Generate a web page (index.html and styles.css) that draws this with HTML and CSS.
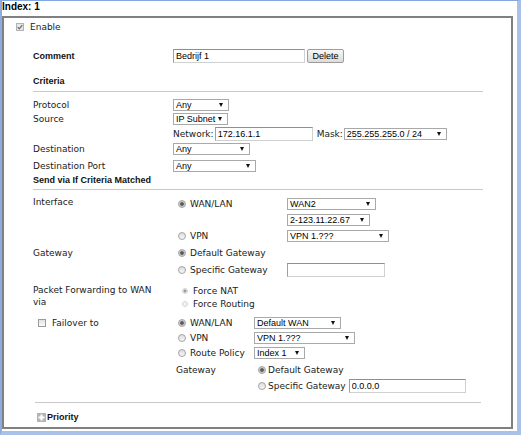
FILE: index.html
```html
<!DOCTYPE html>
<html lang="en">
<head>
    <meta charset="UTF-8">
    <title>Route Policy - Index 1</title>
    <link rel="stylesheet" href="styles.css">
</head>
<body>
    <div class="frame">
        <div class="frame-title">Index: 1</div>

        <div class="panel">
            <div class="enable-row">
                <svg class="check" width="8" height="8" viewBox="0 0 8 8">
                    <rect x="0.5" y="0.5" width="7" height="7" fill="#e8e8e8" stroke="#b3b3b3"/>
                    <path d="M1.7 4.1 L3.3 5.8 L6.3 2.1" fill="none" stroke="#707070" stroke-width="1.3"/>
                </svg>
                <span>Enable</span>
            </div>

            <div class="section">
                <!-- Comment -->
                <div class="row h14 mt16">
                    <div class="lbl bold">Comment</div>
                    <div class="val">
                        <input class="field w132" type="text" value="Bedrijf 1">
                        <button class="btn">Delete</button>
                    </div>
                </div>

                <!-- Criteria -->
                <div class="row mt12">
                    <div class="lbl bold">Criteria</div>
                </div>
                <div class="sep mt4"></div>

                <div class="row mt7">
                    <div class="lbl">Protocol</div>
                    <div class="val"><div class="sel w56">Any</div></div>
                </div>
                <div class="row mt2">
                    <div class="lbl">Source</div>
                    <div class="val"><div class="sel w55">IP Subnet</div></div>
                </div>
                <div class="row h14 mt2">
                    <div class="lbl"></div>
                    <div class="val">
                        <span>Network:</span>
                        <input class="field w98 ml1" type="text" value="172.16.1.1">
                        <span class="ml4">Mask:</span>
                        <div class="sel w103 ml1">255.255.255.0 / 24</div>
                    </div>
                </div>
                <div class="row mt2">
                    <div class="lbl">Destination</div>
                    <div class="val"><div class="sel w77">Any</div></div>
                </div>
                <div class="row mt5">
                    <div class="lbl">Destination Port</div>
                    <div class="val"><div class="sel w83">Any</div></div>
                </div>
                <div class="row mt2">
                    <div class="lbl bold wide">Send via If Criteria Matched</div>
                </div>
                <div class="sep mt3"></div>

                <!-- Interface -->
                <div class="row h13 mt7">
                    <div class="lbl top">Interface</div>
                    <div class="val">
                        <div class="opt"><span class="radio on"></span><span>WAN/LAN</span></div>
                        <div class="sel w89">WAN2</div>
                    </div>
                </div>
                <div class="row h13 mt3">
                    <div class="lbl"></div>
                    <div class="val">
                        <div class="opt"></div>
                        <div class="sel w83">2-123.11.22.67</div>
                    </div>
                </div>
                <div class="row h13 mt3">
                    <div class="lbl"></div>
                    <div class="val">
                        <div class="opt"><span class="radio"></span><span>VPN</span></div>
                        <div class="sel w102">VPN 1.???</div>
                    </div>
                </div>

                <!-- Gateway -->
                <div class="row mt5">
                    <div class="lbl">Gateway</div>
                    <div class="val">
                        <div class="opt"><span class="radio on"></span><span>Default Gateway</span></div>
                    </div>
                </div>
                <div class="row h13 mt4">
                    <div class="lbl"></div>
                    <div class="val">
                        <div class="opt"><span class="radio"></span><span>Specific Gateway</span></div>
                        <input class="field w98" type="text" value="">
                    </div>
                </div>

                <!-- Packet forwarding -->
                <div class="row h26 mt8 start">
                    <div class="lbl multi">Packet Forwarding to WAN via</div>
                    <div class="val lines">
                        <div class="line"><span class="radio dis on"></span><span>Force NAT</span></div>
                        <div class="line"><span class="radio dis"></span><span>Force Routing</span></div>
                    </div>
                </div>

                <!-- Failover -->
                <div class="row mt7">
                    <div class="lbl failover"><span class="box"></span><span>Failover to</span></div>
                    <div class="val">
                        <div class="opt narrow"><span class="radio on"></span><span>WAN/LAN</span></div>
                        <div class="sel w87">Default WAN</div>
                    </div>
                </div>
                <div class="row mt3">
                    <div class="lbl"></div>
                    <div class="val">
                        <div class="opt narrow"><span class="radio"></span><span>VPN</span></div>
                        <div class="sel w101">VPN 1.???</div>
                    </div>
                </div>
                <div class="row mt3">
                    <div class="lbl"></div>
                    <div class="val">
                        <div class="opt narrow"><span class="radio"></span><span>Route Policy</span></div>
                        <div class="sel w51">Index 1</div>
                    </div>
                </div>
                <div class="row mt5">
                    <div class="lbl"></div>
                    <div class="val sub">
                        <div class="sub-lbl">Gateway</div>
                        <span class="radio on"></span><span class="ml2">Default Gateway</span>
                    </div>
                </div>
                <div class="row h13 mt3">
                    <div class="lbl"></div>
                    <div class="val sub">
                        <div class="sub-lbl"></div>
                        <span class="radio"></span><span class="ml2">Specific Gateway</span>
                        <input class="field w117 ml3" type="text" value="0.0.0.0">
                    </div>
                </div>

                <div class="sep short mt10"></div>

                <div class="row mt8">
                    <div class="priority">
                        <svg width="9" height="9" viewBox="0 0 9 9">
                            <rect width="9" height="9" fill="#b4b4b4"/>
                            <path d="M4.5 1.5v6M1.5 4.5h6" stroke="#fff" stroke-width="2"/>
                        </svg>
                        <span class="bold">Priority</span>
                    </div>
                </div>
            </div>
        </div>
    </div>
</body>
</html>
```

FILE: styles.css
```css
* {
    margin: 0;
    padding: 0;
    box-sizing: border-box;
}

body {
    font-family: "DejaVu Sans", Verdana, sans-serif;
    font-size: 9px;
    color: #1a1a1a;
    background: #fff;
}

.frame {
    width: 521px;
    height: 435px;
    border-top: 1px solid #86a6e2;
    border-left: 2px solid #8fabe0;
    border-right: 4px solid #a9c0e9;
    border-bottom: 4px solid #a9c0e9;
}

.frame-title {
    height: 15px;
    line-height: 15px;
    font: bold 10px "Liberation Sans", Arial, sans-serif;
    color: #000;
}

.panel {
    width: 511px;
    height: 413px;
    border: 2px solid #808080;
    padding: 3px 0 0 12px;
}

.enable-row {
    display: flex;
    align-items: center;
    height: 12px;
}

.enable-row span {
    margin-left: 6px;
}

.section {
    margin-left: 17px;
    width: 450px;
}

/* rows */
.row {
    display: flex;
    align-items: center;
    height: 12px;
}

.row.h13 { height: 13px; }
.row.h14 { height: 14px; }
.row.h26 { height: 26px; }
.row.start { align-items: flex-start; }

.mt2 { margin-top: 2px; }
.mt3 { margin-top: 3px; }
.mt4 { margin-top: 4px; }
.mt5 { margin-top: 5px; }
.mt7 { margin-top: 7px; }
.mt8 { margin-top: 8px; }
.mt10 { margin-top: 10px; }
.mt12 { margin-top: 12px; }
.mt16 { margin-top: 16px; }

.ml1 { margin-left: 1px; }
.ml2 { margin-left: 2px; }
.ml3 { margin-left: 3px; }
.ml4 { margin-left: 4px; }

.lbl {
    width: 140px;
    flex-shrink: 0;
    white-space: nowrap;
}

.lbl.top {
    align-self: flex-start;
    line-height: 10px;
}

.lbl.multi {
    white-space: normal;
    width: 140px;
    padding-right: 14px;
    line-height: 12px;
}

.lbl.wide {
    width: auto;
}

.bold {
    font: bold 9px "Liberation Sans", Arial, sans-serif;
    color: #111;
}

.val {
    display: flex;
    align-items: center;
    height: 100%;
}

.sep {
    height: 1px;
    background: #c9c9c9;
    width: 450px;
}

.sep.short {
    margin-left: 2px;
    width: 446px;
}

/* form controls */
.field {
    height: 14px;
    border: 1px solid;
    border-color: #8f8f8f #d0d0d0 #d0d0d0 #a0a0a0;
    padding: 0 2px;
    font: 9px "Liberation Sans", Arial, sans-serif;
    color: #000;
    background: #fff;
    outline: none;
}

.btn {
    width: 37px;
    height: 14px;
    margin-left: 2px;
    border: 1px solid #9c9c9c;
    border-radius: 2px;
    background: linear-gradient(#f6f6f6, #dcdcdc);
    font: 9px "Liberation Sans", Arial, sans-serif;
    color: #000;
}

.sel {
    display: flex;
    align-items: center;
    justify-content: space-between;
    height: 12px;
    border: 1px solid #a9a9a9;
    background: #fff;
    padding: 0 5px 0 2px;
    font: 9px "Liberation Sans", Arial, sans-serif;
    color: #000;
    white-space: nowrap;
}

.sel::after {
    content: "";
    border-left: 2.5px solid transparent;
    border-right: 2.5px solid transparent;
    border-top: 4px solid #111;
}

.w51 { width: 51px; }
.w55 { width: 55px; }
.w56 { width: 56px; }
.w77 { width: 77px; }
.w83 { width: 83px; }
.w87 { width: 87px; }
.w89 { width: 89px; }
.w98 { width: 98px; }
.w101 { width: 101px; }
.w102 { width: 102px; }
.w103 { width: 103px; }
.w117 { width: 117px; }
.w132 { width: 132px; }

/* radios and checkboxes */
.radio {
    display: inline-block;
    flex-shrink: 0;
    width: 8px;
    height: 8px;
    border-radius: 50%;
    border: 1px solid #a3a3a3;
    background: linear-gradient(#dcdcdc, #f8f8f8);
}

.radio.on {
    background: radial-gradient(circle, #5a5a5a 0, #5a5a5a 1.4px, #bdbdbd 2.2px, #f0f0f0 4px);
}

.radio.dis {
    width: 6px;
    height: 6px;
    border-color: #d6d6d6;
    background: #f2f2f2;
}

.radio.dis.on {
    background: radial-gradient(circle, #9a9a9a 0, #9a9a9a 1px, #e0e0e0 1.8px, #f4f4f4 3px);
}

.box {
    display: inline-block;
    width: 8px;
    height: 8px;
    border: 1px solid #9a9a9a;
    background: linear-gradient(#e2e2e2, #fbfbfb);
}

.opt {
    display: flex;
    align-items: center;
    width: 114px;
    height: 100%;
    padding-left: 5px;
}

.opt.narrow {
    width: 81px;
}

.opt .radio + span {
    margin-left: 4px;
}

.lines {
    flex-direction: column;
    align-items: flex-start;
}

.line {
    display: flex;
    align-items: center;
    height: 13px;
    padding-left: 9px;
}

.line .radio + span {
    margin-left: 5px;
}

.failover {
    display: flex;
    align-items: center;
    padding-left: 5px;
}

.failover .box + span {
    margin-left: 6px;
}

.sub {
    padding-left: 3px;
}

.sub-lbl {
    width: 82px;
}

.priority {
    display: flex;
    align-items: center;
    padding-left: 4px;
}

.priority svg {
    margin-right: 1px;
}
```
